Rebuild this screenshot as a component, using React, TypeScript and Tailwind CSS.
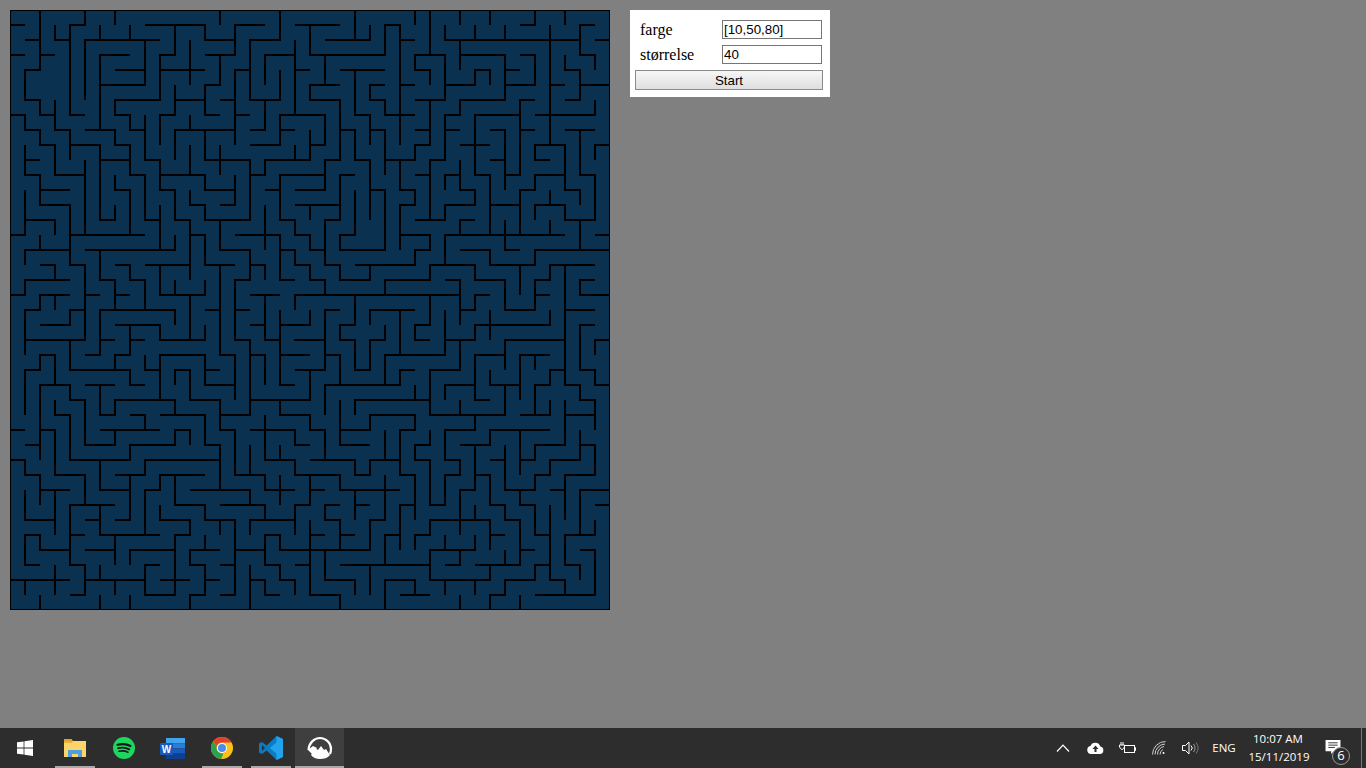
const MAZE = `M0 1L1 1 M2 0L2 4L1 4L1 6L2 6L2 7L3 7 M3 6L3 8L4 8L4 10 M1 2L2 2 M0 3L1 3 M2 3L3 3 M3 1L3 2L4 2 M5 0L5 1L4 1L4 7L5 7
M6 1L6 2 M7 0L7 1 M8 1L8 2 M5 6L5 2L10 2 M9 1L13 1L13 2L15 2 M17 1L15 1L15 3L13 3 M14 0L14 1 M18 0L18 2L16 2L16 6L18 6L18 4
M11 1L11 3L10 3L10 6L7 6L7 7L8 7L8 8L9 8 M9 2L9 5L6 5 M8 3L6 3L6 8 M7 4L9 4 M12 2L12 5 M10 4L13 4 M14 3L14 5L13 5L13 7L14 7 M11 6L13 6
M11 5L11 7L10 7L10 9 M9 7L9 10L10 10L10 12L11 12L11 14L12 14L12 18 M10 11L13 11L13 12L15 12 M15 11L15 13L14 13 M12 7L12 8 M11 10L11 8L15 8
M13 8L13 10L16 10L16 14L13 14L13 13L12 13L12 12 M12 9L12 11 M14 9L14 11 M15 9L15 4L16 4 M14 6L15 6 M15 7L16 7 M16 8L17 8L17 6
M16 9L18 9L18 7L21 7L21 9L20 9 M18 8L19 8 M17 5L17 3L19 3 M19 2L19 7 M19 4L20 4 M20 8L20 10 M19 9L19 10 M17 10L20 10 M17 10L17 11L16 11
M18 11L21 11 M18 11L18 14L19 14L19 15L20 15L20 16L21 16 M17 12L18 12 M19 12L21 12 M19 13L22 13 M20 13L20 14 M17 13L17 16 M15 15L18 15
M18 15L18 18L19 18 M18 16L19 16L19 17L20 17L20 18L21 18L21 19 M16 17L17 17L17 18 M16 16L16 18L15 18L15 22 M14 16L16 16 M14 14L14 16
M13 17L15 17 M13 15L13 17 M12 15L13 15 M14 17L14 23 M11 15L11 16L5 16 M10 13L10 16 M9 14L10 14 M9 11L9 14 M8 11L9 11 M8 9L8 11 M7 9L8 9 M7 8L7 9 M5 8L7 8
M4 9L6 9L6 14L7 14L7 13 M6 10L8 10 M7 11L7 12L8 12L8 15 M4 15L9 15 M5 10L5 15 M2 8L2 9L3 9L3 11L5 11 M1 8L2 8 M1 7L1 8 M0 7L1 7
M1 9L1 11L2 11L2 13L4 13L4 15 M1 10L2 10 M2 12L4 12 M1 12L1 15L0 15 M1 14L3 14L3 15 M2 15L2 16 M1 17L1 16L4 16 M4 15L4 17L5 17L5 22
M2 17L3 17L3 18 M1 19L1 18L4 18 M0 19L1 19 M2 20L2 19L4 19 M3 19L3 20 M1 20L2 20 M4 20L5 20 M5 19L6 19 M6 16L6 18L7 18L7 20 M7 19L8 19
M7 17L8 17L8 18L9 18L9 20 M9 17L12 17 M10 17L10 19L13 19L13 18 M11 18L11 19 M13 20L14 20 M16 19L18 19 M17 19L17 22L18 22 M19 19L30 19 M38 19L40 19
M20 20L20 21 M19 19L19 20 M38 19L38 18L39 18

M19 1L22 1 M20 1L20 3L25 3L25 1L26 1L26 9 M26 2L27 2 M21 2L24 2L24 1 M23 0L23 2 M27 0L27 1 M28 0L28 3 M27 3L29 3L29 6L27 6 M27 3L27 4L28 4L28 5
M29 5L31 5L31 4L32 4L32 5 M30 0L30 1 M32 0L32 1 M35 0L35 1L34 1 M37 0L37 1 M29 1L29 2L38 2 M31 1L31 2 M33 1L33 2 M36 1L36 9
M38 1L38 3L39 3L39 4 M38 1L39 1 M39 2L40 2 M37 3L37 4L38 4L38 6L37 6 M38 5L40 5 M36 5L37 5 M30 2L30 4 M30 3L33 3L33 6L30 6L30 7L29 7L29 10L28 10L28 14
M27 14L29 14 M29 8L30 8 M33 4L34 4 M33 5L35 5L35 3L34 3 M21 3L21 5 M20 5L22 5 M20 5L20 6L22 6L22 10L21 10L21 12 M22 4L25 4 M23 4L23 7L24 7L24 9
M25 5L24 5L24 6L25 6L25 7L27 7 M26 5L27 5 M28 6L28 9L27 9L27 10L25 10 M27 8L28 8 M25 8L25 11 M24 8L25 8 M26 10L26 12L27 12L27 13L26 13L26 16
M22 8L23 8L23 10L24 10L24 14 M23 11L22 11L22 14L21 14L21 17L22 17L22 18L24 18L24 17 M23 17L27 17L27 16L28 16L28 15L26 15 M23 12L23 15L22 15L22 16L25 16L25 12L24 12
M25 19L25 18L28 18L28 17L31 17L31 18L33 18L33 20L35 20L35 18 M35 17L35 16L40 16 M32 17L35 17 M32 17L32 16L30 16 M35 18L36 18L36 17L39 17 M35 19L36 19 M34 17L34 19 M37 17L37 20
M29 18L30 18L30 20L31 20L31 19L32 19 M37 20L39 20 M29 17L29 15L37 15 M34 15L34 12L35 12L35 11L37 11L37 9L35 9L35 10L36 10 M37 12L38 12L38 13 M37 12L37 11
M36 12L36 13 M35 14L35 13L37 13L37 14L39 14L39 11L38 11L38 8 M37 8L39 8 M38 14L38 16 M36 14L36 15 M39 15L40 15 M33 14L33 16L34 16
M32 11L32 15 M31 11L32 11 M31 11L31 7L34 7 M34 6L34 11L33 11 M35 6L34 6 M33 12L33 8L32 8 M32 10L33 10 M34 8L35 8 M30 9L32 9 M35 7L39 7L39 6 M39 10L39 9L40 9
M32 13L34 13 M30 10L30 12L31 12L31 13L29 13L29 14 M30 11L29 11L29 12 M27 11L28 11 M31 14L30 14L30 15 M30 15L32 15 M23 19L23 21 M28 19L28 21 M24 20L27 20 M21 20L22 20

M1 20L1 23 M1 22L5 22 M2 21L4 21L4 20 M6 20L6 23L5 23 M6 22L7 22 M6 20L11 20L11 21 M7 21L10 21L10 22L13 22L13 21 M12 19L12 22 M8 21L8 23L7 23L7 24 M8 22L9 22
M4 22L4 24L8 24L8 25L9 25 M9 23L9 24L10 24 M10 23L10 26 M10 23L13 23L13 25L15 25 M15 23L15 26 M14 23L15 23 M13 24L14 24 M15 20L16 20 M15 22L16 22L16 27L14 27 M12 26L14 26L14 28L15 28L15 31L17 31L17 32L19 32 M18 31L18 33
M12 24L12 26 M11 25L11 24L12 24 M16 26L20 26 M20 24L20 26 M19 24L20 24 M18 23L20 23 M19 22L21 22 M16 21L17 21 M18 20L18 25L19 25 M18 21L20 21 M16 23L17 23L17 25
M3 23L2 23L2 24L1 24L1 27 M3 23L3 25 M2 25L4 25L4 26L5 26L5 29L7 29L7 28 M2 25L2 30 M6 28L10 28 M8 27L9 27L9 28 M5 25L7 25 M6 25L6 27L7 27L7 26L11 26L11 27 M10 27L13 27L13 29L14 29L14 32
M3 26L3 27L4 27L4 30L8 30L8 29L11 29L11 28L12 28L12 29 M0 28L1 28 M2 28L3 28L3 31L5 31L5 33 M4 37L4 33L7 33 M4 37L5 37L5 39L4 39 M1 29L2 29 M0 30L1 30L1 31L2 31L2 33 M2 32L4 32 M3 32L3 35 M1 32L1 34L3 34
M6 30L6 32L8 32 M8 31L8 34L7 34 M7 31L9 31L9 30L14 30 M6 33L6 35L10 35 M5 34L6 34 M9 32L9 35 M9 32L10 32L10 31L13 31 M11 31L11 33L13 33L13 34L15 34L15 39L14 39 M12 32L16 32L16 33 M14 33L17 33L17 34 M16 34L19 34 M16 34L16 35
M19 33L19 35 M19 33L20 33L20 31 M14 34L14 35 M10 33L10 34L12 34L12 35L11 35L11 39L9 39L9 37L10 37 M10 38L12 38 M8 37L8 36L11 36 M4 35L5 35 M5 36L7 36 M7 35L7 37 M1 37L1 35L2 35L2 36L4 36 M1 37L2 37
M0 38L4 38 M1 38L1 39 M3 37L3 39 M2 39L2 40 M6 37L6 38 M5 38L9 38 M7 38L7 39 M6 39L6 40 M8 39L8 40 M12 37L12 36L14 36 M13 35L13 36 M12 37L13 37L13 39L12 39L12 40 M13 38L14 38 M14 37L15 37
M16 37L16 40 M15 36L17 36 M17 35L17 37 M17 35L18 35L18 36L21 36 M17 37L18 37L18 38L19 38L19 39 M19 37L20 37 M20 34L20 39L22 39L22 40 M20 35L21 35 M16 38L17 38L17 39L18 39 M16 29L16 31 M17 27L17 30
M16 28L19 28L19 29L20 29 M17 30L19 30L19 31L22 31L22 32L26 32 M18 29L18 30 M20 30L23 30L23 31L24 31L24 30L26 30 M18 26L18 27L20 27L20 28L21 28L21 30

M21 20L21 24L20 24 M19 22L21 22 M22 21L23 21 M23 19L23 21 M22 21L22 22L23 22L23 24L24 24L24 22L25 22L25 21 M21 23L22 23L22 25 M21 25L26 25L26 24L27 24 M25 23L25 25 M25 23L29 23L29 22L31 22L31 21L36 21L36 20 M32 20L32 22
M24 20L24 21 M26 20L26 23 M27 22L27 21L28 21 M27 22L28 22 M29 20L29 22 M30 19L30 21 M30 20L31 20 M37 19L37 25 M30 22L30 24L28 24L28 27L33 27L33 25 M32 24L32 25L34 25 M34 23L34 26 M34 23L36 23 M35 23L35 24 M33 22L37 22
M33 22L33 24 M31 23L33 23 M31 23L31 26L32 26 M29 26L29 25L31 25 M30 26L30 27 M27 25L27 26 M23 27L23 26L28 26 M21 25L21 27 M22 26L22 29L24 29 M22 28L24 28L24 27L27 27L27 28L26 28L26 31L27 31L27 34
M25 28L25 30 M31 27L31 28L29 28L29 30L30 30L30 31L29 31L29 33L28 33L28 30L27 30L27 29L28 29L28 28 M30 29L32 29L32 28L36 28 M31 29L31 32L30 32L30 35 M31 31L32 31L32 33L33 33L33 34L34 34L34 37
M28 34L32 34 M28 34L28 35L27 35L27 36 M31 33L31 34 M32 34L32 36 M32 35L33 35 M28 36L31 36L31 35 M29 35L29 36 M30 36L30 37L29 37 M28 36L28 38L32 38L32 37 M31 37L34 37 M33 36L33 37 M34 36L35 36
M33 29L33 32L35 32L35 31L36 31L36 30L38 30L38 28 M32 30L33 30 M38 29L39 29L39 31L37 31L37 34 M36 32L37 32 M34 28L34 31 M34 30L35 30L35 29L37 29L37 26 M37 27L39 27 M39 26L39 28 M38 26L39 26 M38 26L38 25L37 25
M35 25L36 25L36 24L37 24 M35 25L35 27 M34 27L36 27L36 26 M38 21L38 24L39 24L39 25L40 25 M38 21L39 21 M39 22L39 23 M39 22L40 22 M20 32L21 32 M23 32L23 34 M23 33L24 33 M21 33L22 33 M21 33L21 34L22 34L22 36 M22 35L23 35
M25 31L25 34L24 34L24 36L21 36L21 38L23 38L23 39 M26 33L26 36 M26 33L27 33 M25 35L26 35 M25 35L25 37 M22 37L28 37 M24 37L24 39 M25 40L25 38L27 38L27 39 M26 39L28 39 M29 38L29 39 M31 38L31 39 M30 39L30 40
M32 40L32 39L33 39L33 38L35 38L35 37L36 37 M36 33L36 38L37 38L37 39 M35 39L39 39L39 36L38 36 M37 37L38 37L38 38 M37 35L37 37 M37 35L39 35L39 34 M38 32L38 35 M38 32L40 32 M39 33L40 33 M34 39L34 40
M34 33L35 33 M34 32L34 33 M35 33L35 35L36 35 M28 38L28 37`

// walls are stored as separate runs, so fill the corner where two run ends meet
function mazeCorners() {
  const seen = new Map<string, number>()
  for (const run of MAZE.split('M').filter((r) => r.trim())) {
    const pts = run.trim().split('L')
    for (const p of [pts[0], pts[pts.length - 1]]) seen.set(p, (seen.get(p) ?? 0) + 1)
  }
  let d = ''
  for (const [p, n] of seen) {
    if (n < 2) continue
    const [x, y] = p.split(' ').map(Number)
    d += `M${x - 1 / 15} ${y - 1 / 15}h${2 / 15}v${2 / 15}h${-2 / 15}z`
  }
  return d
}

function WinLogo() {
  return (
    <svg width="16" height="16" viewBox="0 0 16 16" fill="#fff">
      <path d="M0 2.3 6.6 1.4V7.6H0Z" />
      <path d="M7.4 1.3 16 0V7.6H7.4Z" />
      <path d="M0 8.4H6.6V14.6L0 13.7Z" />
      <path d="M7.4 8.4H16V16L7.4 14.7Z" />
    </svg>
  )
}

function FolderIcon() {
  return (
    <svg width="22" height="19" viewBox="0 0 22 19">
      <path d="M0 0h7.500l1.500 2H0z" fill="#d9a32e" />
      <path d="M0 2h22v16H0z" fill="#fcd46a" />
      <path d="M0 2h9L8 4H0z" fill="#e8b23c" />
      <path d="M4 18v-7h14v7h-4v-3H8v3z" fill="#4c9fe0" />
    </svg>
  )
}

function SpotifyIcon() {
  return (
    <svg width="22" height="22" viewBox="0 0 22 22">
      <circle cx="11" cy="11" r="11" fill="#1ed760" />
      <path d="M4.5 7.800c4.400-1.200 9.200-.9 13 1.200" stroke="#16181a" strokeWidth="2.200" fill="none" strokeLinecap="round" />
      <path d="M5.200 11.200c3.800-1 7.800-.7 11 1.100" stroke="#16181a" strokeWidth="1.900" fill="none" strokeLinecap="round" />
      <path d="M6 14.300c3.200-.8 6.400-.5 9 .9" stroke="#16181a" strokeWidth="1.600" fill="none" strokeLinecap="round" />
    </svg>
  )
}

function WordIcon() {
  return (
    <svg width="25" height="21" viewBox="0 0 25 21">
      <path d="M6 0h19v5.200H6z" fill="#41a5ee" />
      <path d="M6 5.200h19v5.200H6z" fill="#2b7cd3" />
      <path d="M6 10.400h19v5.200H6z" fill="#185abd" />
      <path d="M6 15.600h19V21H6z" fill="#103f91" />
      <rect x="0" y="5" width="13" height="12" rx="1" fill="#185abd" />
      <text x="6.500" y="14.500" textAnchor="middle" fill="#fff" fontSize="10" fontWeight="700" fontFamily="Liberation Sans">W</text>
    </svg>
  )
}

function ChromeIcon() {
  return (
    <svg width="22" height="22" viewBox="0 0 22 22">
      <circle cx="11" cy="11" r="11" fill="#fbc116" />
      <path d="M11 0a11 11 0 0 1 9.530 5.500H11a5.500 5.500 0 0 0-5.200 3.700L2.200 4.400A11 11 0 0 1 11 0z" fill="#e0412f" />
      <path d="M2.200 4.400 5.800 9.200a5.500 5.500 0 0 0 6.700 7L10.100 22A11 11 0 0 1 2.200 4.400z" fill="#2fa04e" />
      <circle cx="11" cy="11" r="5" fill="#fff" />
      <circle cx="11" cy="11" r="4" fill="#4a8bf0" />
    </svg>
  )
}

function VsCodeIcon() {
  return (
    <svg width="24" height="24" viewBox="0 0 24 24">
      <path d="M17.500 0 24 3v18l-6.500 3L7.600 14.400 3 18l-3-1.500v-9L3 6l4.600 3.600z" fill="#0b7bc4" />
      <path d="M17.500 0 24 3v18l-6.500 3V17.800L10.800 12l6.700-5.800z" fill="#22a3ee" />
      <path d="M3 9l-.2 6L6 12z" fill="#2d2d2d" />
    </svg>
  )
}

function PhotosIcon() {
  return (
    <svg width="26" height="24" viewBox="0 0 26 24" fill="none">
      <path d="M1.500 14C2 7 7 2 13 2c6 0 11 5 11 11 0 2-.4 3.500-1 5" stroke="#fff" strokeWidth="2.200" />
      <path d="M4 19l4-7 3 2 3-4 3 4 2-1 4 6c-2.500 3-6 4-10 4s-7-1.500-9-4z" fill="#fff" />
      <path d="M1 14l5-4 4 2-5 6z" fill="#fff" />
    </svg>
  )
}

function TaskIcon({ children, line, active }: { children: React.ReactNode; line?: boolean; active?: boolean }) {
  return (
    <div className={`relative flex h-10 w-[49px] items-center justify-center ${active ? 'bg-[#3f3f3f]' : ''}`}>
      {children}
      {line && <div className={`absolute bottom-0 h-[2px] ${active ? 'w-full' : 'w-10'} bg-[#a9a9a9]`} />}
    </div>
  )
}

export default function App() {
  return (
    <div className="flex h-screen w-full flex-col overflow-hidden bg-[#808080] font-['Liberation_Sans',sans-serif]">
      <div className="flex flex-1 items-start gap-5 p-[10px]">
        <svg width="600" height="600" viewBox="0 0 40 40" className="shrink-0 bg-[#0a3250]" shapeRendering="crispEdges">
          <path d={MAZE} fill="none" stroke="#000" strokeWidth={2 / 15} strokeLinejoin="miter" />
          <path d={mazeCorners()} fill="#000" />
          <rect x="0" y="0" width="40" height="40" fill="none" stroke="#000" strokeWidth={2 / 15} />
        </svg>

        <div className="flex w-[200px] flex-col bg-white pt-[10px] pb-[7px] pl-[5px]">
          <div className="flex h-[19px] items-center pl-[5px]">
            <label className="w-[82px] font-['Liberation_Serif',serif] text-base text-black">farge</label>
            <input readOnly value="[10,50,80]" className="h-[19px] w-[100px] border border-[#767676] px-px text-[13.33px] text-black outline-none" />
          </div>
          <div className="mt-[6px] flex h-[19px] items-center pl-[5px]">
            <label className="w-[82px] font-['Liberation_Serif',serif] text-base text-black">størrelse</label>
            <input readOnly value="40" className="h-[19px] w-[100px] border border-[#767676] px-px text-[13.33px] text-black outline-none" />
          </div>
          <button className="mt-[6px] h-5 w-[188px] border border-[#8a8a8a] bg-gradient-to-b from-[#f6f6f6] to-[#dfdfdf] pt-px text-[13.33px] leading-none text-black">Start</button>
        </div>
      </div>

      <div className="flex h-10 shrink-0 items-center bg-[#2d2d2d] font-['Open_Sans',sans-serif] text-white">
        <div className="flex h-10 w-[50px] items-center justify-center"><WinLogo /></div>
        <TaskIcon line><FolderIcon /></TaskIcon>
        <TaskIcon><SpotifyIcon /></TaskIcon>
        <TaskIcon><WordIcon /></TaskIcon>
        <TaskIcon line><ChromeIcon /></TaskIcon>
        <TaskIcon line><VsCodeIcon /></TaskIcon>
        <TaskIcon line active><PhotosIcon /></TaskIcon>

        <div className="ml-auto flex h-10 items-center">
          <div className="flex w-8 justify-center">
            <svg width="14" height="8" viewBox="0 0 14 8" fill="none" stroke="#fff" strokeWidth="1.200"><path d="M1 7.500 7 1.200l6 6.300" /></svg>
          </div>
          <div className="flex w-8 justify-center">
            <svg width="17" height="12" viewBox="0 0 17 12"><path d="M4 12a4 4 0 0 1-.6-7.900A5.200 5.200 0 0 1 13.300 4.500 3.800 3.800 0 0 1 13 12z" fill="#fff" /><path d="M8.500 3.500 11.500 7H9.500v3h-2V7h-2z" fill="#2d2d2d" /></svg>
          </div>
          <div className="flex w-8 justify-center">
            <svg width="17" height="12" viewBox="0 0 17 12" fill="none" stroke="#fff"><rect x="5.500" y="3.500" width="10" height="7" /><path d="M15.500 5.500h1v3h-1M2 0v3M4 0v3M.5 3h5v2L3.500 7.500H2.500L.5 5z" /></svg>
          </div>
          <div className="flex w-8 justify-center">
            <svg width="14" height="14" viewBox="0 0 14 14" fill="none" stroke="#cfcfcf"><path d="M.5 13.500A13 13 0 0 1 13.500 .5M3 13.500A10.500 10.500 0 0 1 13 3M5.500 13.500A8 8 0 0 1 12 5.500M8 13.500a5.500 5.500 0 0 1 3-5" /><circle cx="11.500" cy="12" r="1" fill="#fff" stroke="none" /></svg>
          </div>
          <div className="flex w-[30px] justify-center">
            <svg width="17" height="14" viewBox="0 0 17 14" fill="none" stroke="#fff"><path d="M.5 4.500h3L7 1v12L3.500 9.500h-3z" /><path d="M9 4.500a3.500 3.500 0 0 1 0 5" /><path d="M11.500 3a6 6 0 0 1 0 8" stroke="#999" /><path d="M14 1.500a9 9 0 0 1 0 11" stroke="#777" /></svg>
          </div>
          <div className="w-[38px] text-center text-[11.5px]">ENG</div>
          <div className="w-[70px] pl-[2px] text-center text-[11.5px] leading-[18px]">
            <div className="pr-[2px]">10:07 AM</div>
            <div>15/11/2019</div>
          </div>
          <div className="relative flex h-10 w-[41px] items-center justify-center">
            <svg width="16" height="14" viewBox="0 0 16 15" className="-mt-[3px] -ml-[2px]"><path d="M0 0h16v12H9l-3 3v-3H0z" fill="#fff" /><path d="M3 3h10M3 5.500h10M3 8h7" stroke="#2d2d2d" /></svg>
            <div className="absolute top-[19px] left-[19px] flex h-[18px] w-[18px] items-center justify-center rounded-full border border-[#999] bg-[#2d2d2d] text-[13px]">6</div>
          </div>
          <div className="ml-[7px] h-10 w-[5px] border-l border-[#777]" />
        </div>
      </div>
    </div>
  )
}
